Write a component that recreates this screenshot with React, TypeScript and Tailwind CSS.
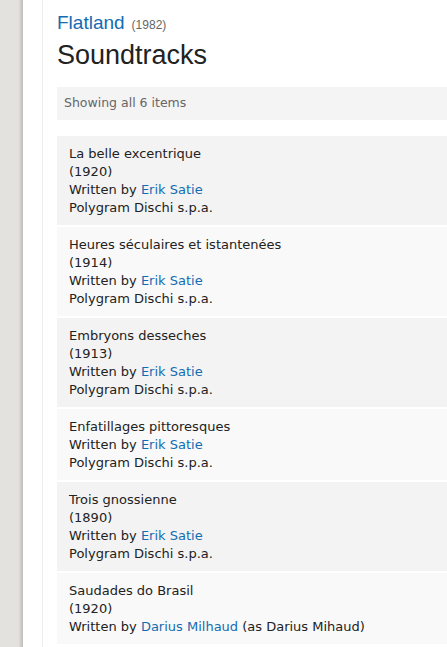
import React from "react";

interface Track {
  title: string;
  year?: string;
  composer: string;
  credit?: string;
  label?: string;
}

const tracks: Track[] = [
  { title: "La belle excentrique", year: "1920", composer: "Erik Satie", label: "Polygram Dischi s.p.a." },
  { title: "Heures séculaires et istantenées", year: "1914", composer: "Erik Satie", label: "Polygram Dischi s.p.a." },
  { title: "Embryons desseches", year: "1913", composer: "Erik Satie", label: "Polygram Dischi s.p.a." },
  { title: "Enfatillages pittoresques", composer: "Erik Satie", label: "Polygram Dischi s.p.a." },
  { title: "Trois gnossienne", year: "1890", composer: "Erik Satie", label: "Polygram Dischi s.p.a." },
  { title: "Saudades do Brasil", year: "1920", composer: "Darius Milhaud", credit: "(as Darius Mihaud)" },
];

const TrackRow: React.FC<{ track: Track; odd: boolean }> = ({ track, odd }) => {
  return (
    <div className={`pl-3 pt-[9px] pb-[8px] leading-[18px] ${odd ? "bg-[#f3f3f3]" : "bg-[#f9f9f9]"}`}>
      <div>{track.title}</div>
      {track.year && <div>({track.year})</div>}
      <div>
        Written by <span className="text-[#136cb2]">{track.composer}</span>
        {track.credit && <span> {track.credit}</span>}
      </div>
      {track.label && <div>{track.label}</div>}
    </div>
  );
};

export default function App() {
  return (
    <div className="flex h-[647px] w-[447px] overflow-hidden bg-white">
      <div className="w-[23px] shrink-0 bg-gradient-to-r from-[#e3e2de] from-80% to-[#bdbcb8]" />
      <div className="w-[20px] shrink-0 border-r border-[#ececec]" />
      <div className="flex-1 pl-[14px]">
        <div className="pt-[12px] font-['Liberation_Sans',Arial,sans-serif]">
          <div className="flex items-baseline gap-[7px] leading-[22px]">
            <span className="text-[19px] text-[#136cb2]">Flatland</span>
            <span className="text-[12px] text-[#666]">(1982)</span>
          </div>
          <h1 className="mt-[3px] text-[27px] leading-[32px] text-[#222]">Soundtracks</h1>
        </div>
        <div className="mt-[16px] w-[420px] bg-[#f4f4f4] pl-[7px] h-[33px] flex items-center font-['DejaVu_Sans',Verdana,sans-serif] text-[12.5px] text-[#666]">
          Showing all 6 items
        </div>
        <div className="mt-[16px] flex w-[420px] flex-col gap-[2px] font-['DejaVu_Sans',Verdana,sans-serif] text-[13px] text-[#222]">
          {tracks.map((t, i) => (
            <TrackRow key={t.title} track={t} odd={i % 2 === 0} />
          ))}
        </div>
      </div>
    </div>
  );
}
